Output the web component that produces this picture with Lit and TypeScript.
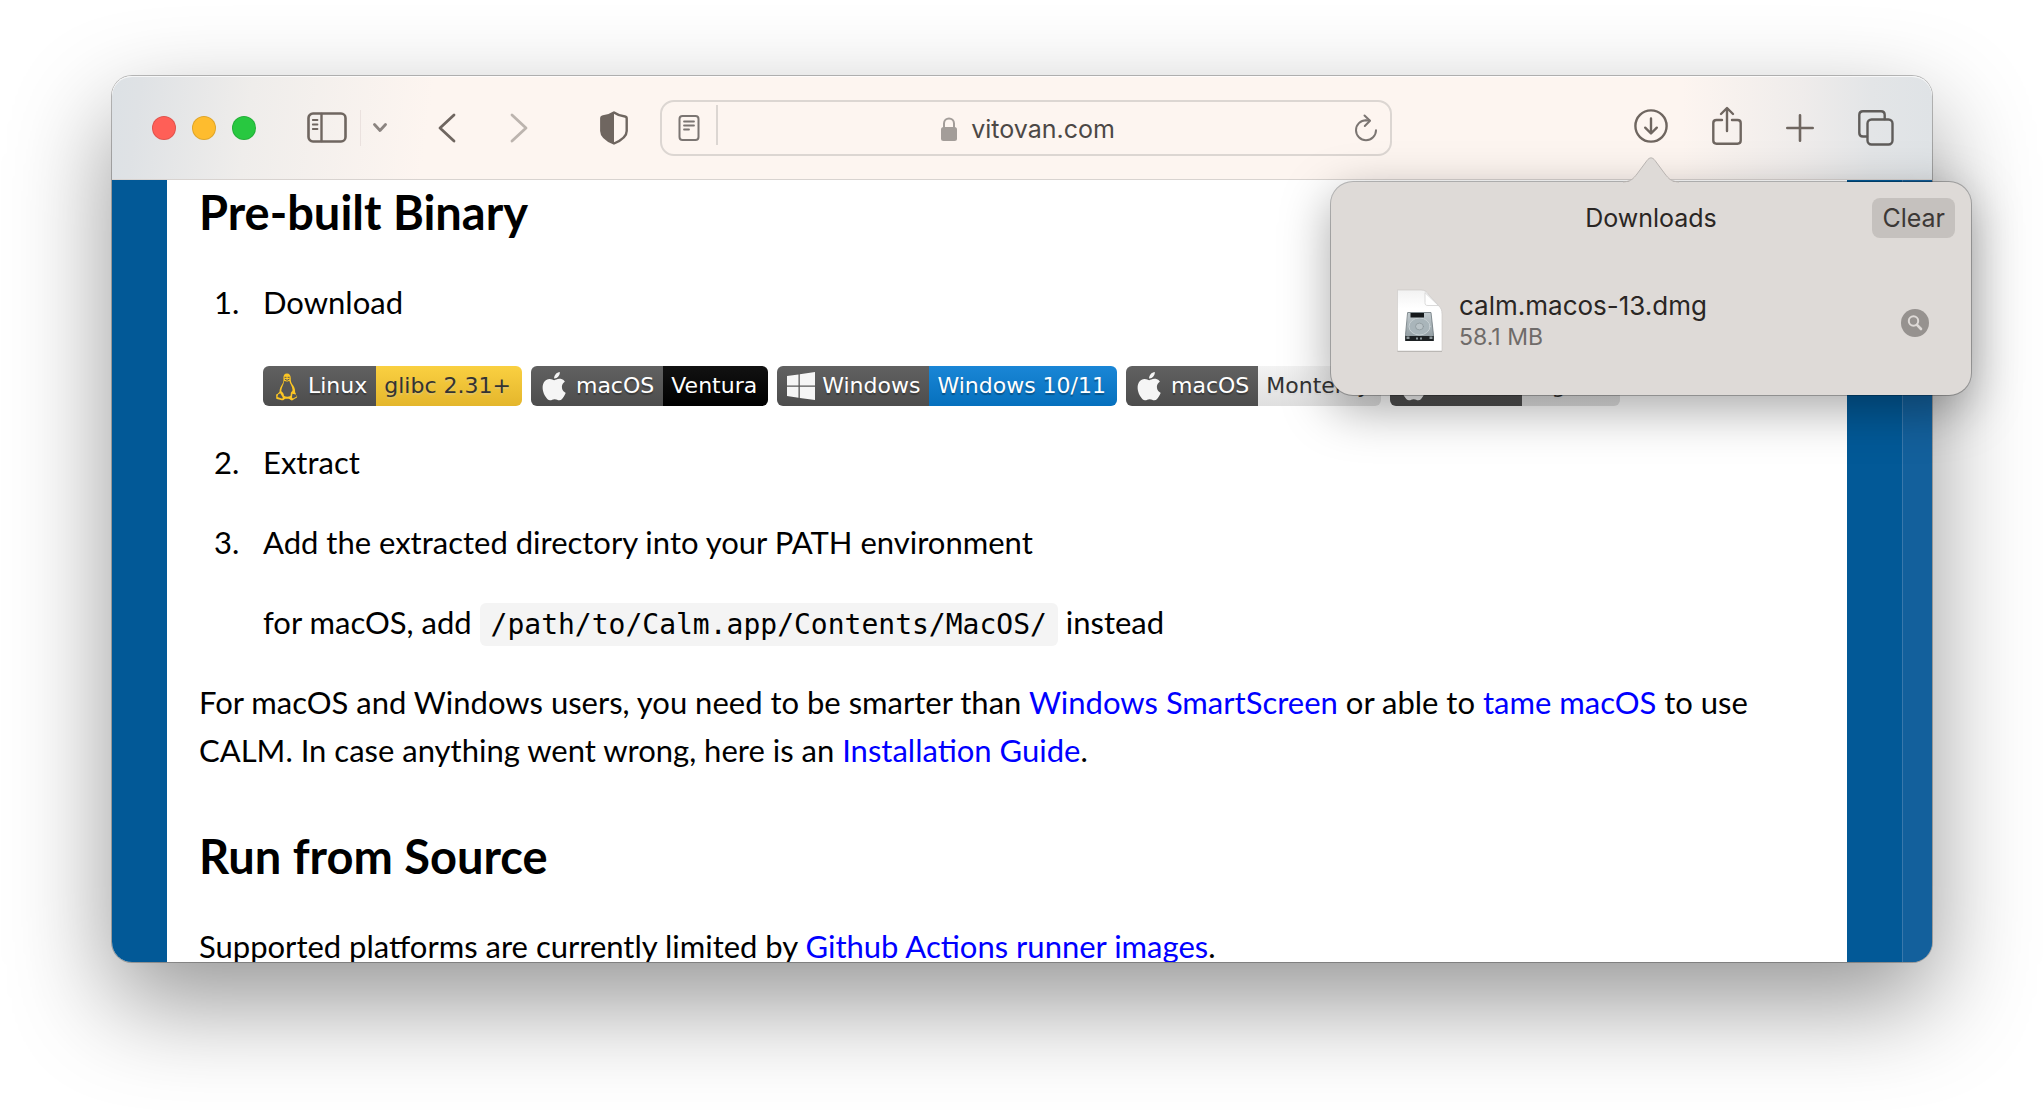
import { LitElement, html, svg, css } from "lit";
import { customElement } from "lit/decorators.js";

interface Badge {
  icon: "linux" | "apple" | "windows";
  label: string;
  value: string;
  tone: string;
}

const badges: Badge[] = [
  { icon: "linux", label: "Linux", value: "glibc 2.31+", tone: "yellow" },
  { icon: "apple", label: "macOS", value: "Ventura", tone: "black" },
  { icon: "windows", label: "Windows", value: "Windows 10/11", tone: "blue" },
  { icon: "apple", label: "macOS", value: "Monterey", tone: "light" },
  { icon: "apple", label: "macOS", value: "Big Sur", tone: "light" },
];

const badgeIcons = {
  linux: svg`
    <path d="M14 2.6c-2.6 0-3.7 2-3.6 4.400c.1 2.600.2 3.900-.9 5.700c-1.700 2.500-3 5-3 8c-1 .8-1.100 2-2.500 2.400c-1.600.5-.5 2-.8 3.300c-.3 1.600 1 1.600 2.800 2c2 .5 3.300 1.600 4.600.5c.9-.7 1-1.200 3.400-1.200s2.800.6 3.600 1.200c1.500 1.100 2.600.1 3.700-.8c1.100-.9 3-1.200 2.900-2.300c-.1-1-1.400-1-1.300-2.700c0-.8-.5-1.200-.8-1.800c.4-3.300-1.200-6-3-8.400c-1.300-1.800-1.300-3.300-1.300-5.300c0-2.900-1.200-5-3.800-5z" fill="#fcc624"/>
    <path d="M13.900 10.500c1.300 0 2.100-.6 2.500-.5c.3 2.600 3.100 5.400 3.200 9c0 1.500-1.300 1.300-1.700 2.800c-.3 1.200 0 2.700-.6 3.300c-1.500 1-4.600 1-6 0c-.7-.6-.2-1.800-1.200-3.100c-.8-1.100-1.900-1.400-1.800-2.500c.3-3 2.300-5.300 2.900-9.400c.6 0 1.500.4 2.700.4z" fill="#555"/>
    <path d="M11.900 6.300h1.200M15 6.300h1.200M12.200 8.300l1.900 1l2-1" stroke="#555" stroke-width="1" fill="none"/>
    <path d="M4.500 26l.5-2.500l2.200-1.200l2.600 4.200l-.5 1.300zM23.800 25.600l-1-2l-3.400-.8l-.5 3.700l1 1z" fill="#555"/>`,
  apple: svg`
    <path fill="#f5f5f5" transform="translate(-1 1) scale(1.180)" d="M12.152 6.896c-.948 0-2.415-1.078-3.960-1.040-2.040.027-3.910 1.183-4.961 3.014-2.117 3.675-.546 9.103 1.519 12.090 1.013 1.454 2.208 3.090 3.792 3.039 1.520-.065 2.090-.987 3.935-.987 1.831 0 2.350.987 3.960.948 1.637-.026 2.676-1.480 3.676-2.948 1.156-1.688 1.636-3.325 1.662-3.415-.039-.013-3.182-1.221-3.220-4.857-.026-3.040 2.480-4.494 2.597-4.559-1.429-2.090-3.623-2.324-4.390-2.376-2-.156-3.675 1.090-4.610 1.090zM15.530 3.830c.843-1.012 1.400-2.427 1.245-3.830-1.207.052-2.662.805-3.532 1.818-.780.896-1.454 2.338-1.273 3.714 1.338.104 2.715-.688 3.559-1.701"/>`,
  windows: svg`
    <path fill="#f5f5f5" d="M0 4l11.500-1.600v11.200H0zM12.800 2.200L28 0v13.600H12.800zM0 14.700h11.500v11L0 24.100zM12.800 14.700H28V28l-15.200-2.100z"/>`,
};

@customElement("app-root")
export class AppRoot extends LitElement {
  static styles = css`
    :host {
      display: block;
      --ui: Inter, "Liberation Sans", sans-serif;
      --prose: Lato, "Open Sans", sans-serif;
      --badge: "DejaVu Sans", sans-serif;
      --ink: #6f6660;
    }
    * {
      box-sizing: border-box;
    }
    svg {
      display: block;
      fill: none;
      stroke-linecap: round;
      stroke-linejoin: round;
    }
    button {
      border: 0;
      padding: 0;
      background: none;
      color: inherit;
      font: inherit;
    }
    .stage {
      display: flex;
      height: 100vh;
      padding: 76px 112px 148px;
      background: #fff;
      overflow: hidden;
    }
    .window {
      flex: 1;
      min-width: 0;
      display: flex;
      flex-direction: column;
      border-radius: 20px;
      box-shadow: 0 0 0 1px rgba(0, 0, 0, 0.25), 0 40px 100px rgba(0, 0, 0, 0.42);
    }

    .toolbar {
      position: relative;
      z-index: 1;
      flex: none;
      display: flex;
      align-items: center;
      height: 104px;
      padding: 0 38px 0 40px;
      border-radius: 20px 20px 0 0;
      border-bottom: 1px solid #d8d3d0;
      box-shadow: inset 0 1px 0 rgba(255, 255, 255, 0.7);
      background:
        linear-gradient(98deg, #dce1e5 0, #dfe2e5 30px, #efedeb 140px, rgba(253, 245, 240, 0) 320px),
        linear-gradient(90deg, #fdf5f0 calc(100% - 250px), #efeceb calc(100% - 130px), #e3e5e7 calc(100% - 60px), #dfe3e6 100%);
      color: var(--ink);
    }
    .lights {
      display: flex;
      gap: 16px;
    }
    .light {
      width: 24px;
      height: 24px;
      border-radius: 50%;
      border: 1px solid rgba(0, 0, 0, 0.12);
    }
    .light.red { background: #ff5f57; }
    .light.amber { background: #febc2e; }
    .light.green { background: #28c840; }
    .left,
    .right {
      flex: 1 1 0;
      display: flex;
      align-items: center;
    }
    .left {
      padding-right: 32px;
    }
    .right {
      justify-content: flex-end;
      gap: 44px;
      padding-left: 26px;
    }
    .sidebar {
      margin-left: 51px;
    }
    .rule {
      width: 1px;
      height: 36px;
      margin: 0 12px 0 13px;
      background: #eae1de;
    }
    .back {
      margin-left: 50px;
    }
    .forward {
      margin-left: 52px;
      opacity: 0.45;
    }
    .shield {
      margin-left: auto;
    }

    .address {
      flex: 0 1 732px;
      display: flex;
      align-items: center;
      height: 56px;
      padding: 0 12px 0 16px;
      border: 2px solid #dcd6d2;
      border-radius: 14px;
      font-family: var(--ui);
      font-size: 25px;
      line-height: 40px;
      color: #4c4846;
    }
    .address-rule {
      width: 2px;
      height: 40px;
      margin-left: 16px;
      margin-bottom: 6px;
      background: #dcd6d2;
    }
    .site {
      flex: 1;
      display: flex;
      align-items: center;
      justify-content: center;
      gap: 14px;
      padding-top: 2px;
      padding-right: 16px;
    }
    .site input {
      field-sizing: content;
      border: 0;
      padding: 0;
      background: none;
      color: inherit;
      font: inherit;
      outline: none;
    }

    .anchor {
      position: relative;
    }
    .popover {
      position: absolute;
      z-index: 2;
      top: calc(100% + 35px);
      left: 50%;
      width: 640px;
      transform: translateX(-50%);
      padding: 16px;
      border-radius: 22px;
      background: #dedad7;
      box-shadow: 0 0 0 1px rgba(0, 0, 0, 0.25), 0 14px 50px rgba(0, 0, 0, 0.35);
      font-family: var(--ui);
      color: #2a2624;
    }
    .beak {
      position: absolute;
      bottom: 100%;
      left: 50%;
      transform: translate(-50%, 1px);
    }
    .popover-head {
      display: grid;
      grid-template-columns: 1fr auto 1fr;
      align-items: center;
    }
    .popover-title {
      grid-column: 2;
      margin: 0;
      font-size: 25px;
      font-weight: 400;
      line-height: 38px;
    }
    .clear {
      justify-self: end;
      height: 40px;
      padding: 0 10px;
      border-radius: 8px;
      background: #c5c1be;
      font-size: 25px;
      line-height: 38px;
      color: #3c3836;
    }
    .download {
      display: flex;
      align-items: center;
      margin-top: 51px;
      padding: 0 26px 26px 50px;
    }
    .download-text {
      flex: 1;
      margin-left: 16px;
      padding-bottom: 2px;
    }
    .file {
      font-size: 26px;
      line-height: 34px;
    }
    .size {
      font-size: 23px;
      line-height: 28px;
      color: #6f6b69;
    }
    .reveal {
      padding-top: 4px;
    }

    .viewport {
      flex: 1;
      min-height: 0;
      display: flex;
      overflow: hidden;
      border-radius: 0 0 20px 20px;
      background: #025997;
    }
    .page {
      flex: 1;
      min-width: 0;
      margin: 0 55px;
      padding: 4px 32px 0;
      overflow: hidden;
      background: #fff;
      color: #000;
      font-family: var(--prose);
      font-size: 31px;
      line-height: 48px;
    }
    .track {
      flex: none;
      width: 30px;
      border-left: 1px solid #3a78ab;
      background: #13609c;
    }
    h2 {
      margin: 54px 0 38px;
      font-size: 47px;
      font-weight: 700;
      line-height: 56px;
    }
    h2:first-child {
      margin-top: 0;
    }
    p {
      margin: 32px 0;
    }
    ol {
      margin: 32px 0;
      padding: 0 0 0 64px;
    }
    li::marker {
      content: counter(list-item) ".\\00a0\\00a0\\00a0";
    }
    a {
      color: #0000ff;
      text-decoration: none;
    }
    code {
      padding: 5px 11px;
      border-radius: 6px;
      background: #f4f4f4;
      font-family: "DejaVu Sans Mono", monospace;
      font-size: 28px;
      line-height: 28px;
    }

    .badges {
      display: flex;
      align-items: flex-end;
      gap: 9px;
      height: 48px;
    }
    .badge {
      display: flex;
      height: 40px;
      border-radius: 6px;
      overflow: hidden;
      color: #fff;
      font-family: var(--badge);
      font-size: 22px;
      line-height: 40px;
      white-space: nowrap;
      text-shadow: 0 2px 1px rgba(1, 1, 1, 0.3);
    }
    .badge-label {
      display: flex;
      align-items: center;
      gap: 7px;
      padding: 0 9px 0 10px;
      background: linear-gradient(#616161, #4d4d4d);
    }
    .badge-value {
      padding: 0 11px 0 8px;
    }
    .yellow,
    .light-tone {
      color: #333;
      text-shadow: 0 2px 1px rgba(204, 204, 204, 0.3);
    }
    .yellow { background: linear-gradient(#fad041, #e4b62c); }
    .black { background: linear-gradient(#121212, #000); }
    .blue { background: linear-gradient(#1a86d6, #0670bd); }
    .light-tone { background: linear-gradient(#f3f3f3, #dfdfdf); }
  `;

  private renderBadge(b: Badge) {
    const tone = b.tone === "light" ? "light-tone" : b.tone;
    return html`<a class="badge" href="#download"
      ><span class="badge-label"
        ><svg width="28" height="30" viewBox="0 0 28 ${b.icon === "windows" ? 28 : 30}" aria-hidden="true">${badgeIcons[b.icon]}</svg
        >${b.label}</span
      ><span class="badge-value ${tone}">${b.value}</span></a
    >`;
  }

  private renderPopover() {
    return html`
      <section class="popover" aria-label="Downloads">
        <svg class="beak" width="56" height="26" viewBox="0 0 56 26" aria-hidden="true">
          <path d="M0 26C8 25 10 22 14 17L24 3.500C26.500 0 29.500 0 32 3.500L42 17C46 22 48 25 56 26Z" fill="#dedad7" />
          <path d="M0 25C8 24.500 10 22 14 17L24 3.500C26.500 0 29.500 0 32 3.500L42 17C46 22 48 24.500 56 25" stroke="#b9b4b1" />
        </svg>
        <header class="popover-head">
          <h3 class="popover-title">Downloads</h3>
          <button class="clear">Clear</button>
        </header>
        <div class="download">
          <svg width="46" height="64" viewBox="0 0 46 64" aria-hidden="true">
            <defs>
              <linearGradient id="drive" x1="0" y1="0" x2="0" y2="1">
                <stop offset="0" stop-color="#c3ccd0" />
                <stop offset="1" stop-color="#8b979c" />
              </linearGradient>
              <linearGradient id="sheet" x1="0" y1="0" x2="0" y2="1">
                <stop offset="0" stop-color="#f2f2f2" />
                <stop offset=".3" stop-color="#fff" />
              </linearGradient>
            </defs>
            <path d="M.5 2H24C28 2 30 4 32 7L41 17C44 20 45 22 45 26V63H.5z" fill="#000" opacity=".18" />
            <path d="M.5 1H24C28 1 30 3 32 6L41 16C44 19 45 21 45 25V62H.5z" fill="url(#sheet)" stroke="#c6c3c1" stroke-width=".6" />
            <path d="M28 4V13.500C28 15.500 28.500 16.500 31 16.500H41z" fill="#fff" stroke="#d0d0d0" stroke-width=".8" />
            <path d="M11 23.500H34L36.500 46V51.500H8.500V46z" fill="url(#drive)" stroke="#6a757a" stroke-width=".8" />
            <ellipse cx="22.500" cy="37.500" rx="10.500" ry="8.500" fill="#a9b5ba" stroke="#c7d0d3" stroke-width="1" />
            <ellipse cx="22.500" cy="37.500" rx="4" ry="3.400" fill="#b9c3c7" stroke="#8c979b" stroke-width=".8" />
            <path d="M13.500 24H27V28.500H13.500z" fill="#15191b" />
            <path d="M8.300 47H36.700V52H8.300z" fill="#1d2123" />
            <path d="M9.500 47.500H12.500V50H9.500zM19 48.500H21V50.500H19zM23 48.500H25V50.500H23zM32.500 47.500H35.500V50H32.500z" fill="#8d979b" />
          </svg>
          <div class="download-text">
            <div class="file">calm.macos-13.dmg</div>
            <div class="size">58.1 MB</div>
          </div>
          <button class="reveal" aria-label="Show in Finder">
            <svg width="28" height="28" viewBox="0 0 28 28">
              <circle cx="14" cy="14" r="14" fill="#96928f" />
              <circle cx="12.500" cy="12" r="4.700" stroke="#dedad7" stroke-width="2" />
              <path d="M16 15.800L20 20" stroke="#dedad7" stroke-width="2.600" />
            </svg>
          </button>
        </div>
      </section>
    `;
  }

  private renderToolbar() {
    return html`
      <header class="toolbar">
        <div class="left">
          <div class="lights">
            <button class="light red" aria-label="Close"></button>
            <button class="light amber" aria-label="Minimize"></button>
            <button class="light green" aria-label="Zoom"></button>
          </div>
          <button class="sidebar" aria-label="Sidebar">
            <svg width="40" height="32" viewBox="0 0 40 32" stroke="currentColor">
              <rect x="1.500" y="1.500" width="37" height="28" rx="4.500" stroke-width="2.600" />
              <path d="M14.500 2V29" stroke-width="2.400" />
              <path d="M5.800 8H10.500M5.800 12.500H10.500M5.800 17H10.500" stroke-width="1.800" />
            </svg>
          </button>
          <span class="rule"></span>
          <button aria-label="Tab groups">
            <svg width="14" height="12" viewBox="0 0 14 12" stroke="#8b8480">
              <path d="M1.500 2.500L7 8.500L12.500 2.500" stroke-width="2.800" />
            </svg>
          </button>
          <button class="back" aria-label="Back">
            <svg width="20" height="30" viewBox="0 0 20 30" stroke="currentColor">
              <path d="M17 2L3 15L17 28" stroke-width="2.800" />
            </svg>
          </button>
          <button class="forward" aria-label="Forward">
            <svg width="20" height="30" viewBox="0 0 20 30" stroke="currentColor">
              <path d="M3 2L17 15L3 28" stroke-width="2.800" />
            </svg>
          </button>
          <button class="shield" aria-label="Privacy report">
            <svg width="28" height="34" viewBox="0 0 28 34">
              <path d="M14 1.500C17 3.700 21 5 25 5.500Q26.700 5.800 26.700 7.500V20C26.700 26 20 30 14 32.500C8 30 1.300 26 1.300 20V7.500Q1.300 5.800 3 5.500C7 5 11 3.700 14 1.500Z" stroke="currentColor" stroke-width="2.400" />
              <path d="M14 1.500V32.500C8 30 1.300 26 1.300 20V7.500Q1.300 5.800 3 5.500C7 5 11 3.700 14 1.500Z" fill="currentColor" />
            </svg>
          </button>
        </div>

        <div class="address">
          <button aria-label="Reader">
            <svg width="22" height="26" viewBox="0 0 22 26" stroke="#7b7572">
              <rect x="1.500" y="1" width="19" height="24" rx="3" stroke-width="2" />
              <path d="M6 6.500H16M6 10.500H16M6 14.500H11" stroke-width="1.800" />
            </svg>
          </button>
          <span class="address-rule"></span>
          <div class="site">
            <svg width="16" height="24" viewBox="0 0 16 24" aria-hidden="true">
              <rect x="0" y="10" width="16" height="14" rx="2.500" fill="#a39d99" />
              <path d="M3 11V6.500C3 -.2 13 -.2 13 6.500V11" stroke="#a39d99" stroke-width="2" />
            </svg>
            <input aria-label="Address" .value=${"vitovan.com"} size="11" />
          </div>
          <button aria-label="Reload">
            <svg width="24" height="28" viewBox="0 0 24 28" stroke="#7b7572" stroke-width="2">
              <path d="M12 6.200A10 10 0 1 0 22 16.200" />
              <path d="M10.500 1.500L16 6.800L10.800 12" />
              <path d="M12 6.400H15.500" />
            </svg>
          </button>
        </div>

        <div class="right">
          <div class="anchor">
            <button aria-label="Downloads" aria-expanded="true">
              <svg width="34" height="34" viewBox="0 0 34 34" stroke="currentColor" stroke-width="2.400">
                <circle cx="17" cy="17" r="15.600" />
                <path d="M17 9.500V24M11.200 18.700L17 24.500L22.800 18.700" />
              </svg>
            </button>
            ${this.renderPopover()}
          </div>
          <button aria-label="Share">
            <svg width="30" height="44" viewBox="0 0 30 44" stroke="currentColor" stroke-width="2.400">
              <path d="M10 14H4.500Q1.300 14 1.300 17V34.500Q1.300 37.700 4.500 37.700H25.500Q28.700 37.700 28.700 34.500V17Q28.700 14 25.500 14H20" />
              <path d="M15 25V2.500M9 8L15 2L21 8" />
            </svg>
          </button>
          <button aria-label="New tab">
            <svg width="28" height="28" viewBox="0 0 28 28" stroke="currentColor" stroke-width="2.600">
              <path d="M14 1.300V26.700M1.300 14H26.700" />
            </svg>
          </button>
          <button aria-label="Tab overview">
            <svg width="36" height="36" viewBox="0 0 36 36" stroke="#5f5c5a" stroke-width="2.400">
              <rect x="9.500" y="9.500" width="25" height="25" rx="4" />
              <path d="M9 26.500H5Q1.300 26.500 1.300 23V5Q1.300 1.300 5 1.300H23Q26.700 1.300 26.700 5V9" />
            </svg>
          </button>
        </div>
      </header>
    `;
  }

  render() {
    return html`
      <div class="stage">
        <div class="window">
          ${this.renderToolbar()}
          <div class="viewport">
            <main class="page">
              <h2>Pre-built Binary</h2>
              <ol>
                <li>
                  <p id="download">Download</p>
                  <div class="badges">${badges.map((b) => this.renderBadge(b))}</div>
                </li>
                <li><p>Extract</p></li>
                <li>
                  <p>Add the extracted directory into your PATH environment</p>
                  <p>for macOS, add <code>/path/to/Calm.app/Contents/MacOS/</code> instead</p>
                </li>
              </ol>
              <p>
                For macOS and Windows users, you need to be smarter than
                <a href="#smartscreen">Windows SmartScreen</a> or able to
                <a href="#tame-macos">tame macOS</a> to use CALM. In case anything went wrong, here is an
                <a href="#installation">Installation Guide</a>.
              </p>
              <h2>Run from Source</h2>
              <p>
                Supported platforms are currently limited by
                <a href="#runner-images">Github Actions runner images</a>.
              </p>
            </main>
            <div class="track"></div>
          </div>
        </div>
      </div>
    `;
  }
}
